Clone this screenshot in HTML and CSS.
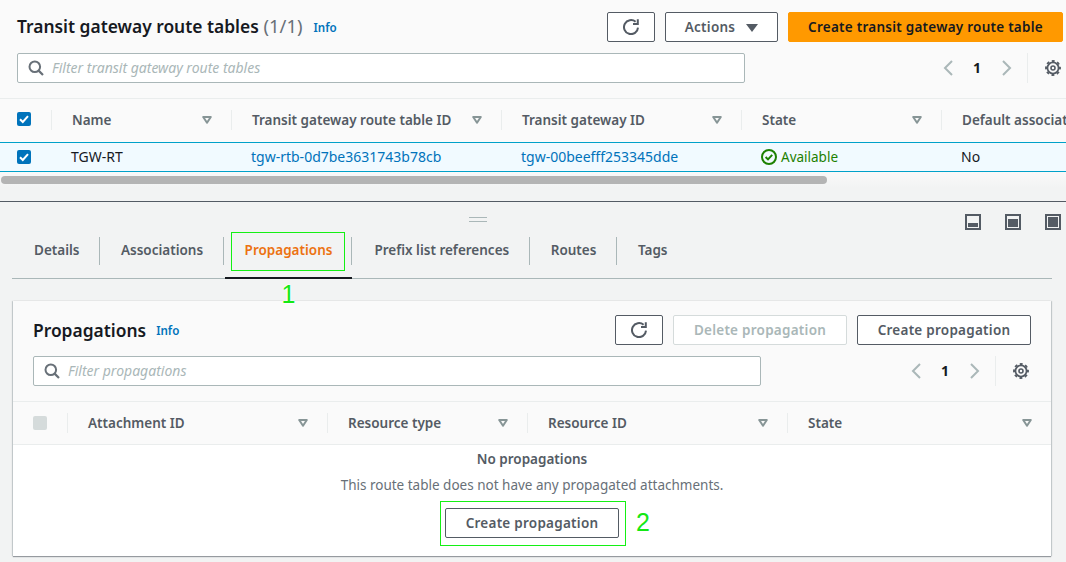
FILE: index.html
```html
<!DOCTYPE html>
<html lang="en">
<head>
<meta charset="utf-8">
<title>Transit gateway route tables</title>
<link rel="stylesheet" href="styles.css">
</head>
<body>
<svg class="defs" width="0" height="0" aria-hidden="true">
  <defs>
    <symbol id="i-refresh" viewBox="0 0 16 16"><path d="M15 8.6A7 7 0 1 1 12.6 2.8" fill="none" stroke="currentColor" stroke-width="2"/><path d="M14.8 0.2V5H10" fill="none" stroke="currentColor" stroke-width="2"/></symbol>
    <symbol id="i-search" viewBox="0 0 16 16"><circle cx="6.8" cy="6.8" r="5.3" fill="none" stroke="currentColor" stroke-width="2"/><path d="M10.6 10.6L15 15" fill="none" stroke="currentColor" stroke-width="2.2"/></symbol>
    <symbol id="i-prev" viewBox="0 0 16 16"><path d="M12 1L5 8l7 7" fill="none" stroke="currentColor" stroke-width="2"/></symbol>
    <symbol id="i-next" viewBox="0 0 16 16"><path d="M4 1l7 7-7 7" fill="none" stroke="currentColor" stroke-width="2"/></symbol>
    <symbol id="i-gear" viewBox="0 0 16 16"><circle cx="8" cy="8" r="5.6" fill="none" stroke="currentColor" stroke-width="1.8"/><circle cx="8" cy="8" r="7" fill="none" stroke="currentColor" stroke-width="1.9" stroke-dasharray="2.9 2.6" stroke-dashoffset="1.45"/><circle cx="8" cy="8" r="2" fill="none" stroke="currentColor" stroke-width="1.6"/></symbol>
    <symbol id="i-sort" viewBox="0 0 10 8"><path d="M1.2 1h7.6L5 6.7z" fill="none" stroke="currentColor" stroke-width="2" stroke-linejoin="round"/></symbol>
    <symbol id="i-check" viewBox="0 0 14 14"><rect width="14" height="14" rx="2" fill="#0073bb"/><path d="M3 7.2l2.8 2.8L11 4.2" fill="none" stroke="#fff" stroke-width="2"/></symbol>
  </defs>
</svg>

<section class="top-pane">
  <header class="head-row">
    <h1 class="title"><span class="title-text">Transit gateway route tables</span> <span class="count">(1/1)</span></h1>
    <a class="info info-top">Info</a>
    <div class="actions">
      <button class="btn btn-icon"><svg class="ico16"><use href="#i-refresh"/></svg></button>
      <button class="btn btn-actions">Actions <span class="caret"></span></button>
      <button class="btn btn-primary">Create transit gateway route table</button>
    </div>
  </header>
  <div class="filter-row">
    <label class="filter"><svg class="ico16 search"><use href="#i-search"/></svg><input class="filter-input" placeholder="Filter transit gateway route tables"></label>
    <div class="pager">
      <svg class="ico16 pg-arrow"><use href="#i-prev"/></svg>
      <span class="pg-num">1</span>
      <svg class="ico16 pg-arrow pg-next"><use href="#i-next"/></svg>
      <span class="pg-sep"></span>
      <svg class="ico16 gear"><use href="#i-gear"/></svg>
    </div>
  </div>
  <div class="table-clip">
    <div class="grid grid-top thead">
      <div class="th th-check"><svg class="check"><use href="#i-check"/></svg></div>
      <div class="th"><span>Name</span><svg class="sort"><use href="#i-sort"/></svg></div>
      <div class="th"><span>Transit gateway route table ID</span><svg class="sort"><use href="#i-sort"/></svg></div>
      <div class="th"><span>Transit gateway ID</span><svg class="sort"><use href="#i-sort"/></svg></div>
      <div class="th"><span>State</span><svg class="sort"><use href="#i-sort"/></svg></div>
      <div class="th"><span>Default association route table</span></div>
    </div>
    <div class="grid grid-top trow">
      <div class="td td-check"><svg class="check"><use href="#i-check"/></svg></div>
      <div class="td">TGW-RT</div>
      <div class="td link">tgw-rtb-0d7be3631743b78cb</div>
      <div class="td link">tgw-00beefff253345dde</div>
      <div class="td status"><svg class="ico16" viewBox="0 0 16 16"><circle cx="8" cy="8" r="7" fill="none" stroke="currentColor" stroke-width="2"/><path d="M4.6 8l2.4 2.4 4.2-4.6" fill="none" stroke="currentColor" stroke-width="2"/></svg>Available</div>
      <div class="td">No</div>
    </div>
  </div>
</section>
<div class="scroll-track"><div class="scroll-thumb"></div></div>

<section class="bottom-pane">
  <div class="pane-bar">
    <span class="handle"></span>
    <svg class="pos" viewBox="0 0 16 16"><rect x="1" y="1" width="14" height="14" fill="none" stroke="#545b64" stroke-width="2"/><rect x="3" y="9" width="10" height="4" fill="#545b64"/></svg>
    <svg class="pos" viewBox="0 0 16 16"><rect x="1" y="1" width="14" height="14" fill="none" stroke="#545b64" stroke-width="2"/><rect x="3" y="5" width="10" height="8" fill="#545b64"/></svg>
    <svg class="pos" viewBox="0 0 16 16"><rect x="1" y="1" width="14" height="14" fill="none" stroke="#545b64" stroke-width="2"/><rect x="3" y="3" width="10" height="10" fill="#545b64"/></svg>
  </div>
  <nav class="tabs">
    <a class="tab">Details</a>
    <a class="tab">Associations</a>
    <a class="tab tab-active">Propagations<span class="mark mark-tab"></span><span class="num num-1">1</span></a>
    <a class="tab">Prefix list references</a>
    <a class="tab">Routes</a>
    <a class="tab tab-last">Tags</a>
  </nav>
  <article class="card">
    <header class="card-head">
      <h2 class="card-title">Propagations</h2>
      <a class="info info-card">Info</a>
      <div class="actions">
        <button class="btn btn-icon"><svg class="ico16"><use href="#i-refresh"/></svg></button>
        <button class="btn btn-wide btn-disabled">Delete propagation</button>
        <button class="btn btn-wide">Create propagation</button>
      </div>
    </header>
    <div class="filter-row filter-row-card">
      <label class="filter"><svg class="ico16 search"><use href="#i-search"/></svg><input class="filter-input" placeholder="Filter propagations"></label>
      <div class="pager">
        <svg class="ico16 pg-arrow"><use href="#i-prev"/></svg>
        <span class="pg-num">1</span>
        <svg class="ico16 pg-arrow pg-next"><use href="#i-next"/></svg>
        <span class="pg-sep"></span>
        <svg class="ico16 gear"><use href="#i-gear"/></svg>
      </div>
    </div>
    <div class="grid grid-card thead thead-card">
      <div class="th th-check"><span class="check-off"></span></div>
      <div class="th"><span>Attachment ID</span><svg class="sort"><use href="#i-sort"/></svg></div>
      <div class="th"><span>Resource type</span><svg class="sort"><use href="#i-sort"/></svg></div>
      <div class="th"><span>Resource ID</span><svg class="sort"><use href="#i-sort"/></svg></div>
      <div class="th th-end"><span>State</span><svg class="sort"><use href="#i-sort"/></svg></div>
    </div>
    <div class="empty">
      <strong class="empty-title">No propagations</strong>
      <p class="empty-text">This route table does not have any propagated attachments.</p>
      <div class="empty-action">
        <button class="btn btn-wide">Create propagation</button>
        <span class="mark mark-btn"></span>
        <span class="num num-2">2</span>
      </div>
    </div>
  </article>
</section>
</body>
</html>
```

FILE: styles.css
```css
* { box-sizing: border-box; }
html, body { margin: 0; padding: 0; }
body {
  width: 1066px;
  height: 562px;
  overflow: hidden;
  background: #f2f3f3;
  color: #16191f;
  font-family: "Noto Sans", "Open Sans", sans-serif;
  font-size: 14px;
  line-height: 20px;
}
.defs { position: absolute; }
.ico16 { width: 16px; height: 16px; display: block; flex: none; }

/* top pane */
.top-pane { background: #fafafa; height: 172px; overflow: hidden; padding-top: 12px; }
.head-row { display: flex; align-items: center; height: 30px; padding: 0 3px 0 17px; }
.title { margin: 0 0 2px; font-size: 18.4px; line-height: 28px; font-weight: 400; color: #687078; white-space: nowrap; }
.title-text, .card-title { font-size: 17.4px; font-weight: 600; color: #16191f; }
.info { font-size: 11.6px; font-weight: 600; color: #0073bb; line-height: 16px; }
.info-top { margin-left: 11px; margin-top: 2px; }
.actions { margin-left: auto; display: flex; gap: 10px; }
.btn {
  height: 30px;
  padding: 0;
  border: 1px solid #545b64;
  border-radius: 2px;
  background: #fff;
  color: #545b64;
  font: 600 13.5px/20px "Noto Sans", "Open Sans", sans-serif;
  letter-spacing: 0.25px;
  display: flex;
  align-items: center;
  justify-content: center;
}
.btn-icon { width: 48px; }
.btn-actions { width: 113px; gap: 11px; }
.caret { width: 0; height: 0; border-left: 6px solid transparent; border-right: 6px solid transparent; border-top: 8px solid #545b64; margin-top: 1px; }
.btn-primary { width: 275px; background: #f90; border-color: #f90; color: #16191f; }
.btn-wide { width: 174px; }
.btn-disabled { border-color: #d5dbdb; color: #aab7b8; }

.filter-row { display: flex; align-items: center; height: 30px; margin-top: 11px; padding: 0 5px 0 17px; }
.filter {
  width: 728px;
  height: 30px;
  display: flex;
  align-items: center;
  padding-left: 10px;
  background: #fff;
  border: 1px solid #aab7b8;
  border-radius: 2px;
}
.search { color: #687078; }
.filter-input {
  flex: 1;
  min-width: 0;
  margin-left: 8px;
  padding: 0;
  border: 0;
  outline: 0;
  background: transparent;
  font: italic 400 14px/20px "Noto Sans", "Open Sans", sans-serif;
  color: #16191f;
}
.filter-input::placeholder { color: #aab7b8; opacity: 1; }
.pager { margin-left: auto; display: flex; align-items: center; height: 30px; }
.pg-arrow { color: #aab7b8; }
.pg-num { width: 20px; margin-left: 11px; text-align: center; font-weight: 700; color: #16191f; }
.pg-next { margin-left: 12px; }
.pg-sep { width: 1px; height: 30px; background: #eaeded; margin-left: 12px; }
.gear { color: #545b64; margin-left: 17px; }

/* tables */
.table-clip { margin-top: 15px; overflow: hidden; }
.grid { display: grid; }
.grid-top { grid-template-columns: 52px 180px 270px 240px 200px 260px; width: 1202px; }
.grid-card { grid-template-columns: 55px 260px 200px 260px 263px; }
.thead { height: 44px; padding-bottom: 2px; border-top: 1px solid #eaeded; background: #fafafa; align-items: center; }
.th {
  display: flex;
  align-items: center;
  justify-content: space-between;
  height: 20px;
  padding: 0 20px;
  border-right: 1px solid #eaeded;
  font-size: 13.5px;
  font-weight: 600;
  color: #545b64;
  white-space: nowrap;
}
.th:last-child { border-right: 0; }
.th-end { padding-right: 20px; }
.th-check { padding: 0 0 0 17px; }
.thead-card .th-check { padding-left: 20px; }
.th-check .check { margin-top: -2px; }
.sort { width: 10px; height: 8px; color: #879596; flex: none; margin-right: -1px; }
.check { width: 14px; height: 14px; display: block; }
.check-off { display: block; width: 14px; height: 14px; background: #d5dbdb; border-radius: 2px; }
.trow {
  height: 30px;
  background: #f1faff;
  border-top: 1px solid #00a1c9;
  border-bottom: 1px solid #00a1c9;
  align-items: center;
}
.td { padding-left: 19px; white-space: nowrap; color: #16191f; }
.td-check { padding-left: 17px; }
.link { color: #0073bb; }
.status { display: flex; align-items: center; gap: 4px; font-size: 13.5px; color: #1d8102; }
.scroll-track { height: 29px; padding: 4px 0 0 1px; background: linear-gradient(#f9f9f9, #f2f3f3 16px); }
.scroll-thumb { width: 826px; height: 8px; background: #b4b4b4; border-radius: 4px; }

/* bottom pane */
.bottom-pane { border-top: 1px solid #545b64; height: 361px; }
.pane-bar { height: 35px; display: flex; align-items: center; gap: 24px; padding-right: 5px; }
.handle { width: 18px; height: 5px; margin-left: 469px; margin-right: auto; border-top: 1px solid #aab7b8; border-bottom: 1px solid #aab7b8; }
.pos { width: 16px; height: 16px; display: block; flex: none; margin-top: 5px; }
.tabs { display: flex; width: 1040px; height: 42px; margin-left: 12px; padding-left: 1px; border-bottom: 1px solid #aab7b8; align-items: flex-start; }
.tab { position: relative; display: block; height: 28px; line-height: 26px; padding: 0 19.5px 0 21px; border-right: 1px solid #aab7b8; font-size: 13.5px; font-weight: 600; color: #545b64; white-space: nowrap; }
.tab-last { border-right: 0; }
.tab-active { color: #ec7211; padding-right: 19px; }
.tab-active + .tab { padding-left: 22px; }
.tab-active::after { content: ""; position: absolute; left: 1px; right: -1px; top: 40px; height: 2px; background: #16191f; }
.mark { position: absolute; border: 1px solid #14f014; }
.mark-tab { left: 7px; right: 6px; top: -5px; height: 39px; }
.num { position: absolute; font: 400 25px/28px "Liberation Sans", Arial, sans-serif; color: #14e814; }
.num-1 { left: 58px; top: 43px; text-shadow: 0 0 2px #fff, 0 0 2px #fff, 0 0 2px #fff; }
.num-2 { left: 191px; top: 0; }

.card {
  width: 1038px;
  height: 255px;
  margin: 22px 0 0 13px;
  background: #fafafa;
  box-shadow: 0 1px 1px 0 rgba(84, 91, 100, .55), 1px 0 1px 0 rgba(0, 28, 36, .14), -1px 0 1px 0 rgba(0, 28, 36, .14);
}
.card-head { display: flex; align-items: center; height: 44px; padding: 14px 20px 0 20px; }
.card-title { margin: 0; line-height: 30px; }
.info-card { margin-left: 10px; margin-top: 2px; }
.filter-row-card { padding: 0 22px 0 20px; }
.thead-card { margin-top: 15px; height: 43px; padding-bottom: 1px; }
.empty { height: 112px; background: #fff; border-top: 1px solid #eaeded; display: flex; flex-direction: column; align-items: center; padding-top: 4px; }
.empty-title { color: #545b64; font-size: 13.5px; font-weight: 600; line-height: 20px; }
.empty-text { margin: 6px 0 0; color: #687078; font-size: 13.5px; line-height: 20px; }
.empty-action { position: relative; margin-top: 13px; }
.mark-btn { left: -5px; right: -7px; top: -7px; height: 45px; }
```
